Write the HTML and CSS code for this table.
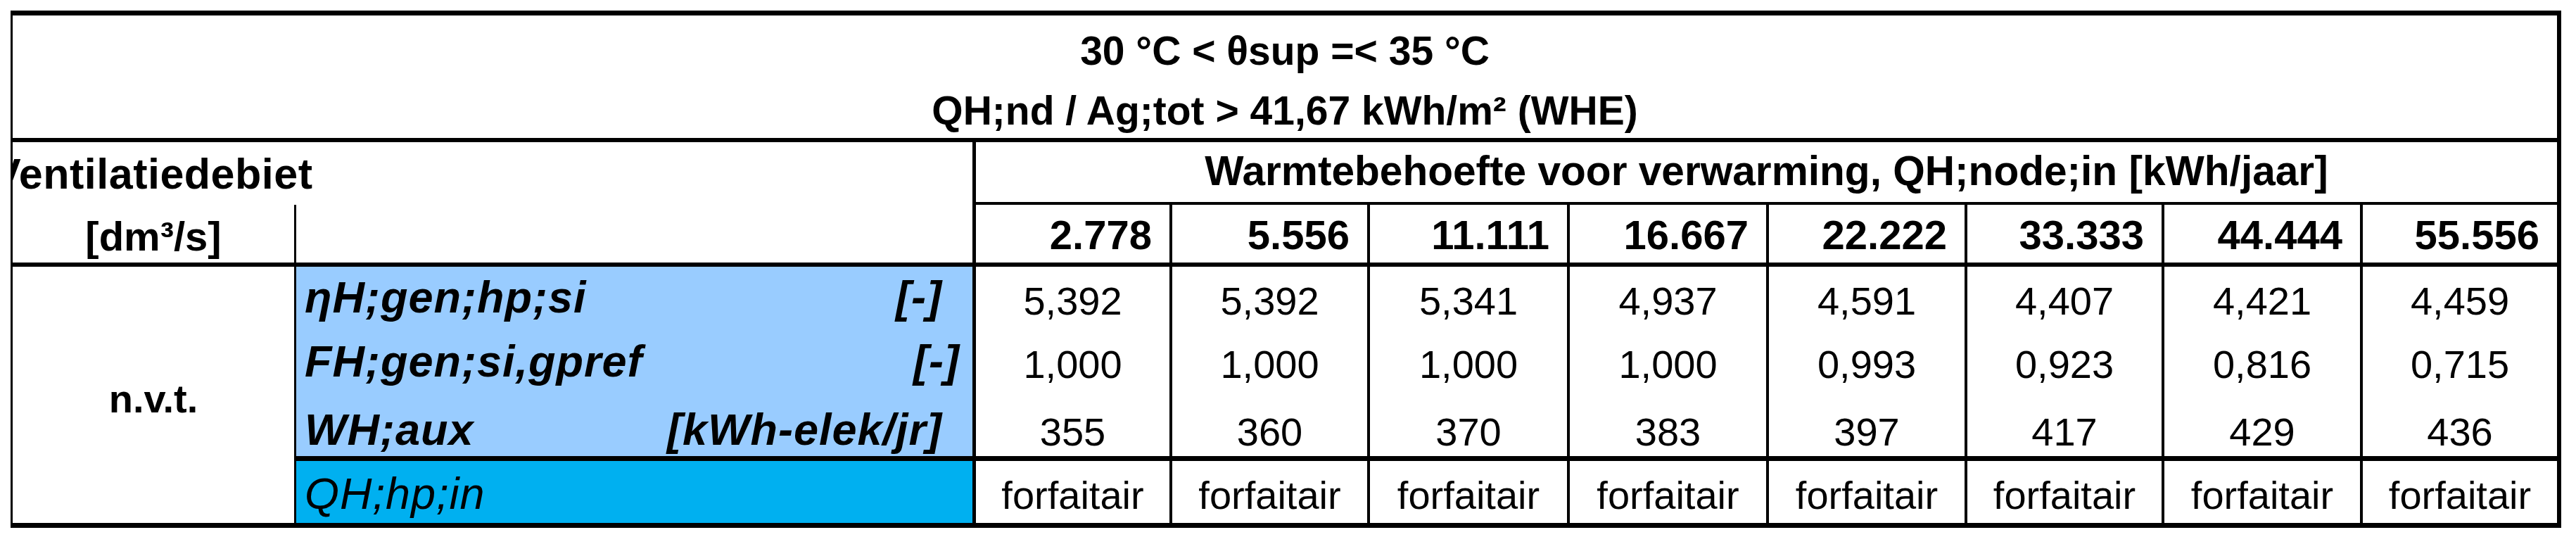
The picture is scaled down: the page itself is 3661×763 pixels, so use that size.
FILE: index.html
```html
<!DOCTYPE html>
<html lang="nl">
<head>
<meta charset="utf-8">
<title>Warmtepomp tabel</title>
<link rel="stylesheet" href="styles.css">
</head>
<body>
<div class="page">
  <div class="sheet">
    <div class="title">
      <div>30 °C &lt; θsup =&lt; 35 °C</div>
      <div>QH;nd / Ag;tot &gt; 41,67 kWh/m² (WHE)</div>
    </div>

    <div class="vent"><span>Ventilatiedebiet</span></div>
    <div class="warm">Warmtebehoefte voor verwarming, QH;node;in [kWh/jaar]</div>

    <div class="unit">[dm³/s]</div>
    <div class="blank"></div>
    <div class="hnum">2.778</div>
    <div class="hnum">5.556</div>
    <div class="hnum">11.111</div>
    <div class="hnum">16.667</div>
    <div class="hnum">22.222</div>
    <div class="hnum">33.333</div>
    <div class="hnum">44.444</div>
    <div class="hnum last">55.556</div>

    <div class="nvt">n.v.t.</div>

    <div class="row r1">
      <div class="label"><span>ηH;gen;hp;si</span><span>[-]</span></div>
      <div class="val">5,392</div>
      <div class="val">5,392</div>
      <div class="val">5,341</div>
      <div class="val">4,937</div>
      <div class="val">4,591</div>
      <div class="val">4,407</div>
      <div class="val">4,421</div>
      <div class="val last">4,459</div>
    </div>

    <div class="row r2">
      <div class="label"><span>FH;gen;si,gpref</span><span>[-]</span></div>
      <div class="val">1,000</div>
      <div class="val">1,000</div>
      <div class="val">1,000</div>
      <div class="val">1,000</div>
      <div class="val">0,993</div>
      <div class="val">0,923</div>
      <div class="val">0,816</div>
      <div class="val last">0,715</div>
    </div>

    <div class="row r3">
      <div class="label"><span>WH;aux</span><span>[kWh-elek/jr]</span></div>
      <div class="val">355</div>
      <div class="val">360</div>
      <div class="val">370</div>
      <div class="val">383</div>
      <div class="val">397</div>
      <div class="val">417</div>
      <div class="val">429</div>
      <div class="val last">436</div>
    </div>

    <div class="row r4">
      <div class="label"><span>QH;hp;in</span></div>
      <div class="val">forfaitair</div>
      <div class="val">forfaitair</div>
      <div class="val">forfaitair</div>
      <div class="val">forfaitair</div>
      <div class="val">forfaitair</div>
      <div class="val">forfaitair</div>
      <div class="val">forfaitair</div>
      <div class="val last">forfaitair</div>
    </div>
  </div>
</div>
</body>
</html>
```

FILE: styles.css
```css
html, body {
  margin: 0;
  background: #ffffff;
}

.page {
  padding: 15px 0 0 15px;
}

.sheet {
  display: grid;
  width: max-content;
  grid-template-columns: 403px 966px 279px 281px 284px 283px 282px 280px 282px 276px;
  grid-template-rows: 180px 89px 88px 90px 90px 96px 88px;
  border-style: solid;
  border-color: #000;
  border-width: 7px 6px 7px 3px;
  font-family: "Liberation Sans", Arial, sans-serif;
  color: #000;
  background: #fff;
}

.row {
  display: contents;
}

.title,
.vent,
.warm,
.unit,
.blank,
.hnum,
.nvt,
.label,
.val {
  box-sizing: border-box;
  display: flex;
  white-space: nowrap;
  line-height: 1.15;
  border: 0 solid #000;
  overflow: hidden;
}

.title {
  grid-column: 1 / -1;
  flex-direction: column;
  align-items: center;
  padding-top: 8px;
  font-size: 57px;
  font-weight: bold;
  line-height: 85px;
  border-bottom-width: 6px;
}

.vent {
  grid-column: span 2;
  align-items: flex-end;
  padding-bottom: 9px;
  font-size: 61px;
  font-weight: bold;
  letter-spacing: 0.5px;
  border-right-width: 5px;
}

.vent span {
  margin-left: -29px;
}

.warm {
  grid-column: span 8;
  justify-content: center;
  align-items: flex-end;
  padding-bottom: 11px;
  font-size: 58.6px;
  font-weight: bold;
  border-bottom-width: 4px;
}

.unit {
  justify-content: center;
  align-items: flex-end;
  padding-bottom: 3px;
  font-size: 58px;
  font-weight: bold;
  border-right-width: 3px;
  border-bottom-width: 6px;
}

.blank {
  border-right-width: 5px;
  border-bottom-width: 6px;
}

.hnum {
  justify-content: flex-end;
  align-items: flex-end;
  padding: 0 25px 5px 0;
  font-size: 58px;
  font-weight: bold;
  border-right-width: 4px;
  border-bottom-width: 6px;
}

.nvt {
  grid-row: span 4;
  justify-content: center;
  align-items: center;
  padding-top: 13px;
  font-size: 56px;
  font-weight: bold;
  border-right-width: 3px;
}

.label {
  justify-content: space-between;
  align-items: flex-end;
  padding-left: 12px;
  padding-right: 43px;
  background: #99ccff;
  font-size: 63px;
  font-weight: bold;
  font-style: italic;
  letter-spacing: 1px;
  border-right-width: 5px;
}

.val {
  justify-content: center;
  align-items: flex-end;
  font-size: 56px;
  border-right-width: 4px;
}

.hnum.last,
.val.last {
  border-right-width: 0;
}

.r1 .label { padding-bottom: 11px; }
.r1 .val { padding-bottom: 9px; }

.r2 .label { padding-bottom: 10px; padding-right: 18px; }
.r2 .val { padding-bottom: 9px; }

.r3 .label { padding-bottom: 2px; border-bottom-width: 7px; }
.r3 .val { padding-bottom: 2px; border-bottom-width: 7px; }

.r4 .label {
  padding-bottom: 6px;
  background: #00b0f0;
  font-weight: normal;
}
.r4 .val { padding-bottom: 7px; }
```
